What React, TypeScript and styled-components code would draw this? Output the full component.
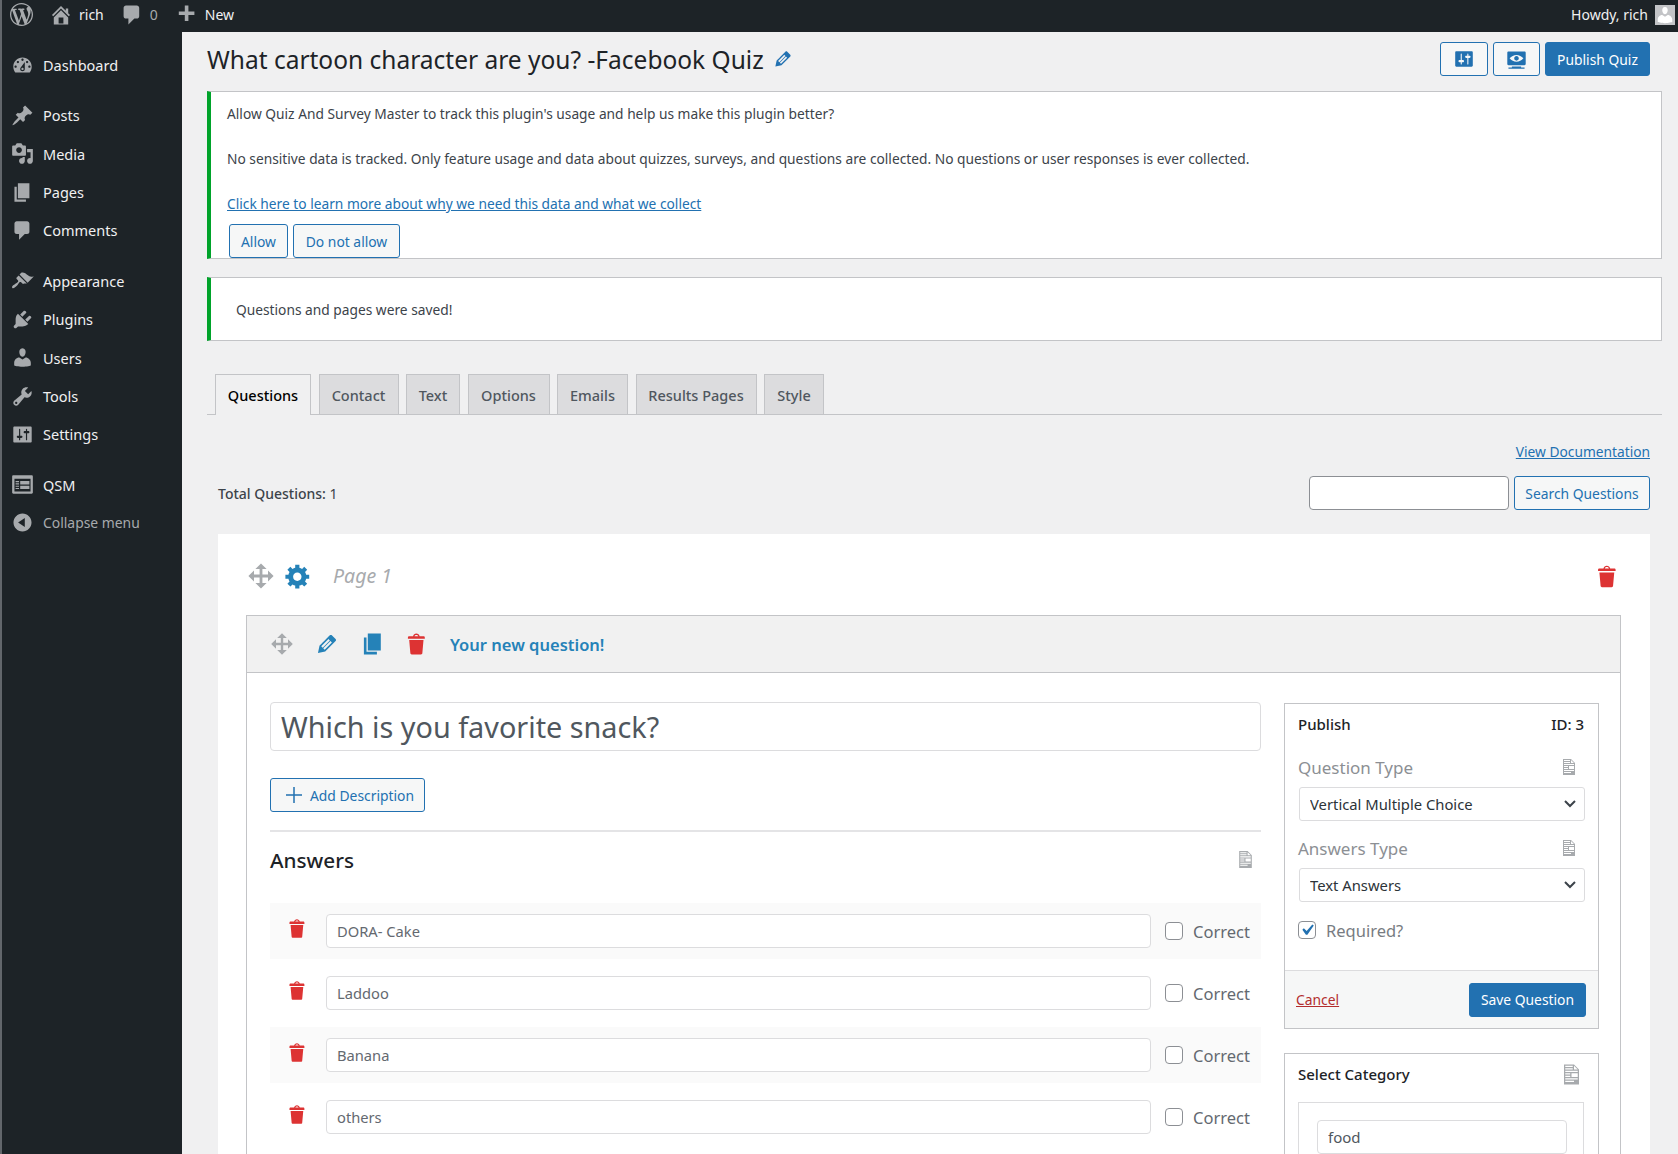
import React from 'react';
import styled, { createGlobalStyle } from 'styled-components';

const FONT = `"Noto Sans", "Open Sans", "Liberation Sans", sans-serif`;

const P = {
  wp: 'M20 10c0-5.51-4.49-10-10-10C4.48 0 0 4.49 0 10c0 5.52 4.48 10 10 10 5.51 0 10-4.48 10-10zM7.78 15.37L4.37 6.22c.55-.02 1.17-.08 1.17-.08.5-.06.44-1.13-.06-1.11 0 0-1.45.11-2.37.11-.18 0-.37 0-.58-.01C4.12 2.69 6.87 1.11 10 1.11c2.33 0 4.45.87 6.05 2.34-.68-.11-1.65.39-1.65 1.58 0 .74.45 1.36.9 2.1.35.61.55 1.36.55 2.46 0 1.49-1.4 5-1.4 5l-3.03-8.37c.54-.02.82-.17.82-.17.5-.05.44-1.25-.06-1.22 0 0-1.44.12-2.38.12-.87 0-2.33-.12-2.33-.12-.5-.03-.56 1.2-.06 1.22l.92.08 1.26 3.41zM17.41 10c.24-.64.74-1.87.43-4.25.7 1.29 1.05 2.71 1.05 4.25 0 3.29-1.73 6.24-4.4 7.78.97-2.59 1.94-5.2 2.92-7.78zM6.1 18.09C3.12 16.65 1.11 13.53 1.11 10c0-1.3.23-2.48.72-3.59C3.25 10.3 4.67 14.2 6.1 18.09zm4.03-6.63l2.58 6.98c-.86.29-1.76.45-2.71.45-.79 0-1.57-.11-2.29-.33.81-2.38 1.62-4.74 2.42-7.1z',
  home: 'M16 8.5l1.53 1.53-1.06 1.06L10 4.62l-6.47 6.47-1.06-1.06L10 2.5l4 4v-2h2v4zm-6-2.46l6 5.99V18H4v-5.97zM12 17v-5H8v5h4z',
  comment: 'M5 2h9c1.1 0 2 .9 2 2v7c0 1.1-.9 2-2 2h-2l-5 5v-5H5c-1.1 0-2-.9-2-2V4c0-1.1.9-2 2-2z',
  plus: 'M17 7v3h-5v5H9v-5H4V7h5V2h3v5h5z',
  thinPlus: 'M9.25 2h1.5v7.25H18v1.5h-7.25V18h-1.5v-7.25H2v-1.5h7.25z',
  dashboard: 'M3.76 16h12.48c1.1-1.37 1.76-3.11 1.76-5 0-4.42-3.58-8-8-8s-8 3.58-8 8c0 1.89.66 3.63 1.76 5zM10 4c.55 0 1 .45 1 1s-.45 1-1 1-1-.45-1-1 .45-1 1-1zM6 6c.55 0 1 .45 1 1s-.45 1-1 1-1-.45-1-1 .45-1 1-1zm8 0c.55 0 1 .45 1 1s-.45 1-1 1-1-.45-1-1 .45-1 1-1zm-5.37 5.55L12 7v6c0 1.1-.9 2-2 2s-2-.9-2-2c0-.57.24-1.08.63-1.45zM4 10c.55 0 1 .45 1 1s-.45 1-1 1-1-.45-1-1 .45-1 1-1zm12 0c.55 0 1 .45 1 1s-.45 1-1 1-1-.45-1-1 .45-1 1-1zm-5 3c0-.55-.45-1-1-1s-1 .45-1 1 .45 1 1 1 1-.45 1-1z',
  post: 'M10.44 3.02l1.82-1.82 6.36 6.35-1.83 1.82c-1.05-.68-2.48-.57-3.41.36l-.75.75c-.92.93-1.04 2.35-.35 3.41l-1.83 1.82-2.41-2.41-2.8 2.79c-.42.42-3.38 2.71-3.8 2.29s1.86-3.39 2.28-3.81l2.79-2.79L4.1 9.36l1.83-1.82c1.05.69 2.48.57 3.4-.36l.75-.75c.93-.92 1.05-2.35.36-3.41z',
  media: 'M13 11V4c0-.55-.45-1-1-1h-1.67L9 1H5L3.67 3H2c-.55 0-1 .45-1 1v7c0 .55.45 1 1 1h10c.55 0 1-.45 1-1zM7 4.5c1.38 0 2.5 1.12 2.5 2.5S8.38 9.5 7 9.5 4.5 8.38 4.5 7 5.62 4.5 7 4.5zM14 6h5v10.5c0 1.38-1.12 2.5-2.5 2.5S14 17.88 14 16.5s1.12-2.5 2.5-2.5c.17 0 .34.02.5.05V9h-3V6zm-4 8.05V13h2v3.5c0 1.38-1.12 2.5-2.5 2.5S7 17.88 7 16.5 8.12 14 9.5 14c.17 0 .34.02.5.05z',
  page: 'M6 15V2h10v13H6zm-1 1h8v2H3V5h2v11z',
  appearance: 'M14.48 11.06L7.41 3.99l1.5-1.5c.5-.56 2.3-.47 3.51.32 1.21.8 1.43 1.28 2.91 2.1 1.18.64 2.45 1.26 4.45.85zm-.71.71L6.7 4.7 4.93 6.47c-.39.39-.39 1.02 0 1.41l1.06 1.06c.39.39.39 1.03 0 1.42-.6.6-1.43 1.11-2.21 1.69-.35.26-.7.53-1.01.84C1.43 13.23.4 14.85 1.15 15.6c.75.75 2.37-.28 3.71-1.62.31-.31.58-.66.84-1.01.58-.78 1.09-1.61 1.69-2.21.39-.39 1.03-.39 1.42 0l1.06 1.06c.39.39 1.02.39 1.41 0z',
  plugins: 'M13.11 4.36L9.87 7.6 8 5.73l3.24-3.24c.35-.34 1.05-.2 1.56.32.52.51.66 1.21.31 1.55zm-8 1.77l.91-1.12 9.01 9.01-1.19.84c-.71.71-2.63 1.16-3.82 1.16H6.14L4.9 17.26c-.59.59-1.54.59-2.12 0-.59-.58-.59-1.53 0-2.12l1.24-1.24v-3.88c0-1.13.4-3.19 1.09-3.89zm7.26 3.97l3.24-3.24c.34-.35 1.04-.21 1.55.31.52.51.66 1.21.31 1.55l-3.24 3.25z',
  users: 'M10 9.25c-2.27 0-2.73-3.44-2.73-3.44C7 4.02 7.82 2 9.97 2c2.16 0 2.98 2.02 2.71 3.81 0 0-.41 3.44-2.68 3.44zm0 2.57L12.72 10c2.39 0 4.52 2.33 4.52 4.53v2.49s-3.65 1.13-7.24 1.13c-3.65 0-7.24-1.13-7.24-1.13v-2.49c0-2.25 1.94-4.48 4.47-4.48z',
  tools: 'M16.68 9.77c-1.34 1.34-3.3 1.67-4.95.99l-5.41 6.52c-.99.99-2.59.99-3.58 0s-.99-2.59 0-3.57l6.52-5.42c-.68-1.65-.35-3.61.99-4.95 1.28-1.28 3.12-1.62 4.72-1.06l-2.89 2.89 2.82 2.82 2.86-2.87c.53 1.58.18 3.39-1.08 4.65zM3.81 16.21c.4.39 1.04.39 1.43 0 .4-.4.4-1.04 0-1.43-.39-.4-1.03-.4-1.43 0-.39.39-.39 1.03 0 1.43z',
  settings: 'M18 16V4c0-.55-.45-1-1-1H3c-.55 0-1 .45-1 1v12c0 .55.45 1 1 1h14c.55 0 1-.45 1-1zM8 11h1c.55 0 1 .45 1 1s-.45 1-1 1H8v1.5c0 .28-.22.5-.5.5s-.5-.22-.5-.5V13H6c-.55 0-1-.45-1-1s.45-1 1-1h1V5.5c0-.28.22-.5.5-.5s.5.22.5.5V11zm5-2h-1c-.55 0-1-.45-1-1s.45-1 1-1h1V5.5c0-.28.22-.5.5-.5s.5.22.5.5V7h1c.55 0 1 .45 1 1s-.45 1-1 1h-1v5.5c0 .28-.22.5-.5.5s-.5-.22-.5-.5V9z',
  feedback: 'M2 2h16c.55 0 1 .45 1 1v14c0 .55-.45 1-1 1H2c-.55 0-1-.45-1-1V3c0-.55.45-1 1-1zm15 14V5H3v11h14zM4 7v1h3V7H4zm4 0v3h8V7H8zm-4 2v1h3V9H4zm0 2v1h3v-1H4zm4 0v3h8v-3H8zm-4 2v1h3v-1H4z',
  collapse: 'M10 2.16c4.33 0 7.84 3.51 7.84 7.84s-3.51 7.84-7.84 7.84S2.16 14.33 2.16 10 5.71 2.16 10 2.16zm2 11.72V6.12L6.18 9.97z',
  edit: 'M13.89 3.39l2.71 2.72c.46.46.42 1.24.03 1.64l-8.01 8.02-5.56 1.16 1.16-5.58s7.6-7.63 7.99-8.03c.39-.39 1.22-.39 1.68.07zm-2.73 2.79l-5.59 5.61 1.11 1.11 5.54-5.65zm-2.97 8.23l5.58-5.6-1.07-1.08-5.59 5.6z',
  view: 'M18 14V4c0-.55-.45-1-1-1H3c-.55 0-1 .45-1 1v10c0 .55.45 1 1 1h14c.55 0 1-.45 1-1zm-8-8c2.3 0 4.4 1.14 6 3-1.6 1.86-3.7 3-6 3s-4.4-1.14-6-3c1.6-1.86 3.7-3 6-3zm2 3c0-1.1-.9-2-2-2s-2 .9-2 2 .9 2 2 2 2-.9 2-2zm2 8h3v1H3v-1h3v-1h8v1z',
  move: 'M19 10l-4 4v-3h-4v4h3l-4 4-4-4h3v-4H5v3l-4-4 4-4v3h4V5H6l4-4 4 4h-3v4h4V6z',
  gear: 'M18 12h-2.18c-.17.7-.44 1.35-.81 1.93l1.54 1.54-2.1 2.1-1.54-1.54c-.58.36-1.23.63-1.91.79V19H8v-2.18c-.68-.16-1.33-.43-1.91-.79l-1.54 1.54-2.12-2.12 1.54-1.54c-.36-.58-.63-1.23-.79-1.91H1V9.03h2.17c.16-.7.44-1.35.8-1.94L2.43 5.55l2.1-2.1 1.54 1.54c.58-.37 1.24-.64 1.93-.81V2h3v2.18c.68.16 1.33.43 1.91.79l1.54-1.54 2.12 2.12-1.54 1.54c.36.59.64 1.24.8 1.94H18V12zm-8.5 1.5c1.66 0 3-1.34 3-3s-1.34-3-3-3-3 1.34-3 3 1.34 3 3 3z',
  trash: 'M12 4h3c.6 0 1 .4 1 1v1H3V5c0-.6.5-1 1-1h3c.2-1.1 1.3-2 2.5-2s2.3.9 2.5 2zM8 4h3c-.2-.6-.9-1-1.5-1S8.2 3.4 8 4zM4 7h11l-.9 10.1c0 .5-.5.9-1 .9H5.9c-.5 0-.9-.4-1-.9L4 7z',
  doc: 'M12 2l4 4v12H4V2h8zM5 3v1h6V3H5zm7 3h3l-3-3v3zM5 5v1h6V5H5zm10 3V7H5v1h10zM5 9v1h4V9H5zm10 3V9h-5v3h5zM5 11v1h4v-1H5zm10 3v-1H5v1h10zm-3 2v-1H5v1h7z',
};

const GlobalStyle = createGlobalStyle`
  html, body { margin: 0; padding: 0; height: 1154px; overflow: hidden; background: #f0f0f1; }
  body { font-family: ${FONT}; font-size: 14px; color: #3c434a; }
  * { box-sizing: border-box; }
`;

const Svg = styled.svg<{ $size: number; $color?: string }>`
  width: ${p => p.$size}px;
  height: ${p => p.$size}px;
  flex: 0 0 ${p => p.$size}px;
  fill: ${p => p.$color || 'currentColor'};
  display: block;
`;

const Icon = ({ d, size, color }: { d: string; size: number; color?: string }) => (
  <Svg viewBox="0 0 20 20" $size={size} $color={color}>
    <path d={d} fillRule="evenodd" />
  </Svg>
);

const Screen = styled.div`
  width: 1678px;
  height: 1154px;
  border-left: 2px solid #62666b;
  display: flex;
  flex-direction: column;
  overflow: hidden;
`;

const AdminBar = styled.header`
  flex: 0 0 32px;
  height: 32px;
  background: #1d2327;
  color: #f0f0f1;
  display: flex;
  align-items: center;
  padding: 0 3px 3px 8px;
  font-size: 14px;
`;

const BarGroup = styled.div<{ $gap: number; $ml: number }>`
  display: flex;
  align-items: center;
  gap: ${p => p.$gap}px;
  margin-left: ${p => p.$ml}px;
`;

const Dim = styled.span`
  color: #a7aaad;
`;

const Howdy = styled.div`
  margin-left: auto;
  display: flex;
  align-items: center;
  gap: 7px;
`;

const Avatar = styled.div`
  width: 20px;
  height: 20px;
  background: #c3c4c7;
  color: #fff;
  display: flex;
  align-items: flex-end;
  justify-content: center;
`;

const Columns = styled.div`
  flex: 1;
  display: flex;
  min-height: 0;
`;

const Sidebar = styled.nav`
  flex: 0 0 180px;
  background: #1d2327;
  padding-top: 14px;
`;

const MenuItem = styled.div<{ $gapTop?: number; $dim?: boolean }>`
  height: 38.3px;
  display: flex;
  align-items: center;
  gap: 9px;
  padding-left: 9px;
  margin-top: ${p => p.$gapTop || 0}px;
  font-size: ${p => (p.$dim ? 13.9 : 14.5)}px;
  color: ${p => (p.$dim ? '#a7aaad' : '#f0f0f1')};
  svg { fill: #a7aaad; }
`;

const Main = styled.main`
  flex: 1;
  min-width: 0;
  padding: 10px 16px 0 25px;
  overflow: hidden;
`;

const TitleRow = styled.div`
  display: flex;
  align-items: center;
  height: 34px;
  padding-right: 12px;
  margin-bottom: 15px;
`;

const Title = styled.h1`
  margin: 2px 0 0;
  font-size: 24.5px;
  font-weight: 400;
  color: #1d2327;
  line-height: 32px;
`;

const TitleEdit = styled.span`
  margin-left: 8px;
  display: flex;
  color: #2271b1;
`;

const TitleActions = styled.div`
  margin-left: auto;
  display: flex;
  gap: 5px;
`;

const Button = styled.button<{ $primary?: boolean; $w?: number }>`
  height: 34px;
  ${p => (p.$w ? `width: ${p.$w}px;` : 'padding: 0 11px;')}
  border: 1px solid #2271b1;
  border-radius: 3px;
  background: ${p => (p.$primary ? '#2271b1' : '#f6f7f7')};
  color: ${p => (p.$primary ? '#fff' : '#2271b1')};
  font-family: ${FONT};
  font-size: 13.85px;
  display: inline-flex;
  align-items: center;
  justify-content: center;
  white-space: nowrap;
`;

const Notice = styled.section`
  background: #fff;
  border: 1px solid #c3c4c7;
  border-left: 4px solid #00a32a;
  padding: 11px 0 0 16px;
  font-size: 13.75px;
  color: #3c434a;
`;

const NoticeLine = styled.p<{ $last?: boolean }>`
  margin: 0 0 ${p => (p.$last ? 0 : 24)}px;
  line-height: 21px;
`;

const TextLink = styled.a`
  color: #2271b1;
  text-decoration: underline;
  font-size: 13.75px;
`;

const NoticeButtons = styled.div`
  display: flex;
  gap: 5px;
  padding-left: 2px;
  margin-top: 10px;
`;

const SavedNotice = styled(Notice)`
  margin-top: 18px;
  height: 64px;
  padding: 0 0 0 25px;
  display: flex;
  align-items: center;
`;

const Tabs = styled.div`
  margin-top: 33px;
  height: 41px;
  display: flex;
  gap: 7.5px;
  padding-left: 8px;
  border-bottom: 1px solid #c3c4c7;
`;

const Tab = styled.div<{ $active?: boolean; $w: number }>`
  width: ${p => p.$w}px;
  height: 41px;
  border: 1px solid #c3c4c7;
  border-bottom: ${p => (p.$active ? '0' : '1px solid #c3c4c7')};
  background: ${p => (p.$active ? '#f0f0f1' : '#dcdcde')};
  color: ${p => (p.$active ? '#000' : '#50575e')};
  font-size: 14.5px;
  font-weight: 500;
  display: flex;
  align-items: center;
  justify-content: center;
  position: relative;
  z-index: ${p => (p.$active ? 1 : 0)};
`;

const Content = styled.div`
  padding: 26px 12px 0 11px;
`;

const DocRow = styled.div`
  display: flex;
  justify-content: flex-end;
  height: 20px;
  align-items: center;
`;

const Toolbar = styled.div`
  margin-top: 15px;
  display: flex;
  align-items: center;
  gap: 5px;
  height: 34px;
`;

const TotalLabel = styled.div`
  margin-right: auto;
  font-size: 14px;
  color: #3c434a;
  b { font-weight: 500; }
`;

const TextField = styled.input<{ $h?: number; $fs?: number; $color?: string }>`
  width: 100%;
  flex: 1;
  min-width: 0;
  height: ${p => p.$h || 34}px;
  border: 1px solid #dcdcde;
  border-radius: 4px;
  background: #fff;
  font-family: ${FONT};
  font-size: ${p => p.$fs || 14.7}px;
  color: ${p => p.$color || '#646970'};
  padding: 0 0 0 10px;
  outline: none;
`;

const SearchField = styled(TextField)`
  flex: 0 0 200px;
  width: 200px;
  border-color: #8c8f94;
`;

const Panel = styled.div`
  margin-top: 24px;
  background: #fff;
  padding: 27px 29px 0 28px;
  height: 700px;
`;

const PageRow = styled.div`
  display: flex;
  align-items: center;
  height: 30px;
  padding: 0 0 0 1px;
  margin-bottom: 24px;
`;

const PageName = styled.span`
  margin: -2px 0 0 21px;
  font-size: 19.5px;
  font-style: italic;
  color: #a7aaad;
`;

const PushRight = styled.span`
  margin-left: auto;
  display: flex;
`;

const GearWrap = styled.span`
  margin-left: 9px;
  display: flex;
`;

const Card = styled.article`
  border: 1px solid #c3c4c7;
  background: #fff;
`;

const CardHeader = styled.div`
  height: 57px;
  background: #f1f1f1;
  border-bottom: 1px solid #c3c4c7;
  display: flex;
  align-items: center;
  gap: 20px;
  padding: 0 0 0 23px;
`;

const TrashSlot = styled.span`
  display: flex;
  margin-left: -2px;
`;

const CardTitle = styled.span`
  font-size: 16.5px;
  font-weight: 600;
  color: #2582b8;
`;

const CardBody = styled.div`
  display: grid;
  grid-template-columns: 991px 315px;
  column-gap: 23px;
  padding: 29px 0 0 23px;
`;

const QuestionCol = styled.div`
  min-width: 0;
`;

const DescButton = styled(Button)`
  margin-top: 27px;
  justify-content: flex-start;
  padding-left: 13px;
  gap: 6px;
`;

const Divider = styled.hr`
  margin: 18px 0 0;
  border: 0;
  border-top: 2px solid #e4e4e6;
`;

const AnswersHead = styled.div`
  height: 71px;
  display: flex;
  justify-content: space-between;
  align-items: center;
  padding: 0 5px 16px 0;
`;

const AnswersTitle = styled.h2`
  margin: 0;
  font-size: 20.7px;
  font-weight: 500;
  color: #1d2327;
`;

const AnswerRow = styled.div<{ $shaded: boolean }>`
  height: 56px;
  margin-bottom: 6px;
  display: flex;
  align-items: center;
  padding: 0 11px 0 16px;
  background: ${p => (p.$shaded ? '#fafafa' : '#fff')};
`;

const AnswerTrash = styled.span`
  display: flex;
  margin: -5px 17px 0 0;
`;

const Check = styled.input`
  appearance: none;
  width: 18px;
  height: 18px;
  margin: 0;
  flex: 0 0 18px;
  border: 1px solid #8c8f94;
  border-radius: 4px;
  background: #fff center / 22px no-repeat;
  &:checked {
    background-image: url("data:image/svg+xml;utf8,<svg xmlns='http://www.w3.org/2000/svg' viewBox='0 0 20 20'><path fill='%232271b1' d='M14.83 4.89l1.34.94-5.81 8.38H9.02L5.78 9.67l1.34-1.25 2.57 2.4z'/></svg>");
  }
`;

const CheckLabel = styled.label<{ $ml: number; $light?: boolean }>`
  margin-left: ${p => p.$ml}px;
  font-size: 16.5px;
  color: ${p => (p.$light ? '#787c82' : '#646970')};
  display: flex;
  align-items: center;
`;

const CorrectWrap = styled.div`
  margin-left: 14px;
  display: flex;
  align-items: center;
`;

const SideCol = styled.aside`
  min-width: 0;
  display: flex;
  flex-direction: column;
  gap: 24px;
  margin-top: 1px;
`;

const Box = styled.div`
  border: 1px solid #c3c4c7;
  background: #fff;
`;

const BoxTitle = styled.div`
  height: 40px;
  padding: 0 14px 0 13px;
  display: flex;
  justify-content: space-between;
  align-items: center;
  font-size: 15px;
  font-weight: 500;
  color: #1d2327;
`;

const FieldHead = styled.div<{ $first?: boolean }>`
  height: 26px;
  margin-top: ${p => (p.$first ? 10 : 0)}px;
  padding: 0 19px 0 13px;
  display: flex;
  justify-content: space-between;
  align-items: center;
  font-size: 17px;
  color: #8c8f94;
`;

const SelectWrap = styled.div`
  margin: 7px 13px 14px 14px;
  height: 34px;
  position: relative;
  display: flex;
`;

const Select = styled.select`
  appearance: none;
  width: 100%;
  height: 34px;
  border: 1px solid #dcdcde;
  border-radius: 3px;
  background: #fff;
  padding: 0 24px 0 10px;
  font-family: ${FONT};
  font-size: 14.8px;
  color: #2c3338;
  outline: none;
`;

const Chevron = styled.svg`
  position: absolute;
  right: 8px;
  top: 11px;
  width: 14px;
  height: 12px;
  fill: none;
  stroke: #3c434a;
  stroke-width: 2;
  pointer-events: none;
`;

const RequiredRow = styled.div`
  display: flex;
  align-items: center;
  height: 26px;
  padding-left: 13px;
  margin-top: 15px;
  margin-bottom: 27px;
`;

const BoxFooter = styled.div`
  height: 58px;
  border-top: 1px solid #dcdcde;
  background: #f6f7f7;
  display: flex;
  justify-content: space-between;
  align-items: center;
  padding: 0 12px 0 11px;
`;

const CancelLink = styled.a`
  color: #b32d2e;
  text-decoration: underline;
  font-size: 13.85px;
`;

const CategoryInner = styled.div`
  margin: 8px 14px 0 13px;
  border: 1px solid #dcdcde;
  padding: 17px 16px 20px 18px;
  display: flex;
`;

const menu: { label: string; d: string; gap?: number; dim?: boolean }[] = [
  { label: 'Dashboard', d: P.dashboard },
  { label: 'Posts', d: P.post, gap: 12 },
  { label: 'Media', d: P.media },
  { label: 'Pages', d: P.page },
  { label: 'Comments', d: P.comment },
  { label: 'Appearance', d: P.appearance, gap: 12.5 },
  { label: 'Plugins', d: P.plugins },
  { label: 'Users', d: P.users },
  { label: 'Tools', d: P.tools },
  { label: 'Settings', d: P.settings },
  { label: 'QSM', d: P.feedback, gap: 12 },
  { label: 'Collapse menu', d: P.collapse, dim: true },
];

const tabs = [
  { label: 'Questions', w: 96, active: true },
  { label: 'Contact', w: 80 },
  { label: 'Text', w: 54 },
  { label: 'Options', w: 82 },
  { label: 'Emails', w: 71 },
  { label: 'Results Pages', w: 121 },
  { label: 'Style', w: 60 },
];

const answers = ['DORA- Cake', 'Laddoo', 'Banana', 'others'];

const Caret = () => (
  <Chevron viewBox="0 0 14 12">
    <path d="M2 3l5 5 5-5" />
  </Chevron>
);

export default function App() {
  return (
    <>
      <GlobalStyle />
      <Screen>
        <AdminBar>
          <Icon d={P.wp} size={23} color="#a7aaad" />
          <BarGroup $gap={6} $ml={16}>
            <Icon d={P.home} size={24} color="#a7aaad" />
            <span>rich</span>
          </BarGroup>
          <BarGroup $gap={6} $ml={16}>
            <Icon d={P.comment} size={24} color="#a7aaad" />
            <Dim>0</Dim>
          </BarGroup>
          <BarGroup $gap={7} $ml={16}>
            <Icon d={P.plus} size={24} color="#a7aaad" />
            <span>New</span>
          </BarGroup>
          <Howdy>
            <span>Howdy, rich</span>
            <Avatar>
              <Icon d={P.users} size={20} color="#fff" />
            </Avatar>
          </Howdy>
        </AdminBar>
        <Columns>
          <Sidebar>
            {menu.map(m => (
              <MenuItem key={m.label} $gapTop={m.gap} $dim={m.dim}>
                <Icon d={m.d} size={23} />
                <span>{m.label}</span>
              </MenuItem>
            ))}
          </Sidebar>
          <Main>
            <TitleRow>
              <Title>What cartoon character are you? -Facebook Quiz</Title>
              <TitleEdit>
                <Icon d={P.edit} size={22} />
              </TitleEdit>
              <TitleActions>
                <Button $w={48}>
                  <Icon d={P.settings} size={22} />
                </Button>
                <Button $w={47}>
                  <Icon d={P.view} size={23} />
                </Button>
                <Button $primary $w={105}>
                  Publish Quiz
                </Button>
              </TitleActions>
            </TitleRow>

            <Notice>
              <NoticeLine>Allow Quiz And Survey Master to track this plugin's usage and help us make this plugin better?</NoticeLine>
              <NoticeLine>No sensitive data is tracked. Only feature usage and data about quizzes, surveys, and questions are collected. No questions or user responses is ever collected.</NoticeLine>
              <NoticeLine $last>
                <TextLink href="#">Click here to learn more about why we need this data and what we collect</TextLink>
              </NoticeLine>
              <NoticeButtons>
                <Button $w={59}>Allow</Button>
                <Button $w={107}>Do not allow</Button>
              </NoticeButtons>
            </Notice>

            <SavedNotice>Questions and pages were saved!</SavedNotice>

            <Tabs>
              {tabs.map(t => (
                <Tab key={t.label} $active={t.active} $w={t.w}>
                  {t.label}
                </Tab>
              ))}
            </Tabs>

            <Content>
              <DocRow>
                <TextLink href="#">View Documentation</TextLink>
              </DocRow>
              <Toolbar>
                <TotalLabel>
                  <b>Total Questions:</b> 1
                </TotalLabel>
                <SearchField />
                <Button $w={136}>Search Questions</Button>
              </Toolbar>

              <Panel>
                <PageRow>
                  <Icon d={P.move} size={28} color="#a7aaad" />
                  <GearWrap>
                    <Icon d={P.gear} size={28} color="#2582b8" />
                  </GearWrap>
                  <PageName>Page 1</PageName>
                  <PushRight>
                    <Icon d={P.trash} size={27} color="#dd3333" />
                  </PushRight>
                </PageRow>

                <Card>
                  <CardHeader>
                    <Icon d={P.move} size={24} color="#a7aaad" />
                    <Icon d={P.edit} size={26} color="#2582b8" />
                    <Icon d={P.page} size={26} color="#2582b8" />
                    <TrashSlot>
                      <Icon d={P.trash} size={26} color="#dd3333" />
                    </TrashSlot>
                    <CardTitle>Your new question!</CardTitle>
                  </CardHeader>
                  <CardBody>
                    <QuestionCol>
                      <TextField defaultValue="Which is you favorite snack?" $h={49} $fs={28.8} $color="#50575e" />
                      <div>
                        <DescButton $w={155}>
                          <Icon d={P.thinPlus} size={20} />
                          Add Description
                        </DescButton>
                      </div>
                      <Divider />
                      <AnswersHead>
                        <AnswersTitle>Answers</AnswersTitle>
                        <Icon d={P.doc} size={21} color="#a7aaad" />
                      </AnswersHead>
                      {answers.map((a, i) => (
                        <AnswerRow key={a} $shaded={i % 2 === 0}>
                          <AnswerTrash>
                            <Icon d={P.trash} size={23} color="#dd3333" />
                          </AnswerTrash>
                          <TextField defaultValue={a} />
                          <CorrectWrap>
                            <Check type="checkbox" />
                            <CheckLabel $ml={10}>Correct</CheckLabel>
                          </CorrectWrap>
                        </AnswerRow>
                      ))}
                    </QuestionCol>

                    <SideCol>
                      <Box>
                        <BoxTitle>
                          <span>Publish</span>
                          <span>ID: 3</span>
                        </BoxTitle>
                        <FieldHead $first>
                          <span>Question Type</span>
                          <Icon d={P.doc} size={20} color="#a7aaad" />
                        </FieldHead>
                        <SelectWrap>
                          <Select defaultValue="v">
                            <option value="v">Vertical Multiple Choice</option>
                          </Select>
                          <Caret />
                        </SelectWrap>
                        <FieldHead>
                          <span>Answers Type</span>
                          <Icon d={P.doc} size={20} color="#a7aaad" />
                        </FieldHead>
                        <SelectWrap>
                          <Select defaultValue="t">
                            <option value="t">Text Answers</option>
                          </Select>
                          <Caret />
                        </SelectWrap>
                        <RequiredRow>
                          <Check type="checkbox" defaultChecked />
                          <CheckLabel $ml={10} $light>Required?</CheckLabel>
                        </RequiredRow>
                        <BoxFooter>
                          <CancelLink href="#">Cancel</CancelLink>
                          <Button $primary $w={117}>
                            Save Question
                          </Button>
                        </BoxFooter>
                      </Box>
                      <Box>
                        <BoxTitle>
                          <span>Select Category</span>
                          <Icon d={P.doc} size={25} color="#a7aaad" />
                        </BoxTitle>
                        <CategoryInner>
                          <TextField defaultValue="food" $fs={15} $color="#50575e" />
                        </CategoryInner>
                      </Box>
                    </SideCol>
                  </CardBody>
                </Card>
              </Panel>
            </Content>
          </Main>
        </Columns>
      </Screen>
    </>
  );
}
